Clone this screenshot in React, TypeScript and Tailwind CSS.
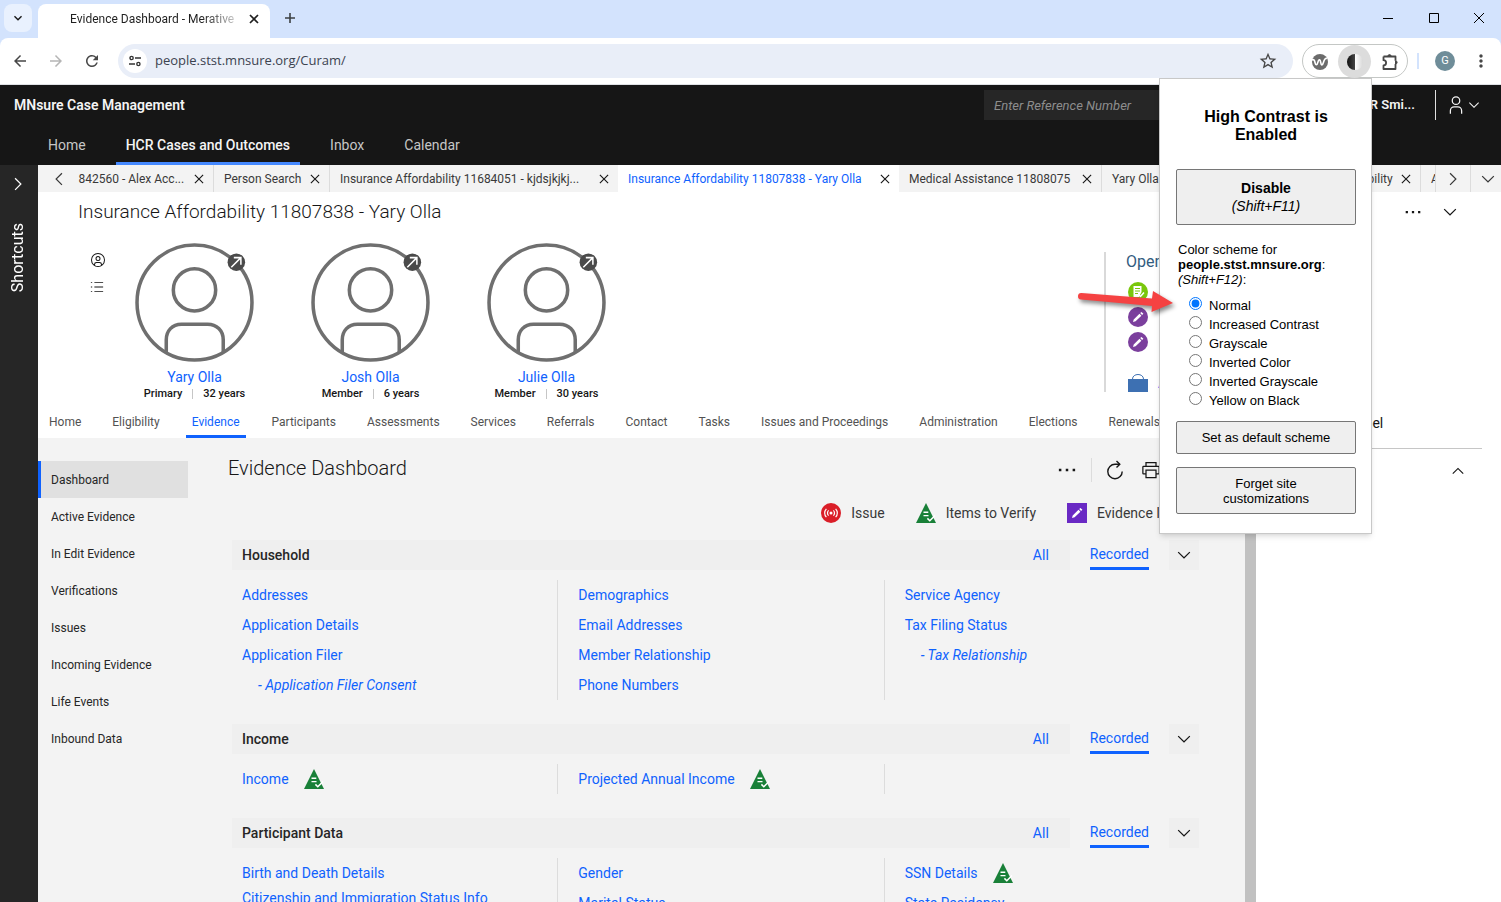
import { useState } from "react";
import type { ReactNode } from "react";
import {
  MdArrowBack,
  MdArrowForward,
  MdKeyboardArrowDown,
  MdMoreVert,
  MdRefresh,
  MdStarBorder,
} from "react-icons/md";

type EvidenceLink = { label: string; verify?: boolean; sub?: boolean; tall?: boolean };
type Section = { title: string; columns: EvidenceLink[][] };

const primaryNav = ["Home", "HCR Cases and Outcomes", "Inbox", "Calendar"];

const members = [
  { name: "Yary Olla", role: "Primary", age: "32 years" },
  { name: "Josh Olla", role: "Member", age: "6 years" },
  { name: "Julie Olla", role: "Member", age: "30 years" },
];

const caseNav = [
  "Home",
  "Eligibility",
  "Evidence",
  "Participants",
  "Assessments",
  "Services",
  "Referrals",
  "Contact",
  "Tasks",
  "Issues and Proceedings",
  "Administration",
  "Elections",
  "Renewals",
];

const sideNav = [
  "Dashboard",
  "Active Evidence",
  "In Edit Evidence",
  "Verifications",
  "Issues",
  "Incoming Evidence",
  "Life Events",
  "Inbound Data",
];

const sections: Section[] = [
  {
    title: "Household",
    columns: [
      [
        { label: "Addresses" },
        { label: "Application Details" },
        { label: "Application Filer" },
        { label: "Application Filer Consent", sub: true },
      ],
      [
        { label: "Demographics" },
        { label: "Email Addresses" },
        { label: "Member Relationship" },
        { label: "Phone Numbers" },
      ],
      [
        { label: "Service Agency" },
        { label: "Tax Filing Status" },
        { label: "Tax Relationship", sub: true },
      ],
    ],
  },
  {
    title: "Income",
    columns: [
      [{ label: "Income", verify: true }],
      [{ label: "Projected Annual Income", verify: true }],
      [],
    ],
  },
  {
    title: "Participant Data",
    columns: [
      [
        { label: "Birth and Death Details" },
        { label: "Citizenship and Immigration Status Info", tall: true },
      ],
      [{ label: "Gender" }, { label: "Marital Status" }],
      [{ label: "SSN Details", verify: true }, { label: "State Residency" }],
    ],
  },
];

const schemes = [
  "Normal",
  "Increased Contrast",
  "Grayscale",
  "Inverted Color",
  "Inverted Grayscale",
  "Yellow on Black",
];

const glyphs = {
  down: "M16 22 6 12l1.4-1.4 8.6 8.6 8.6-8.6L26 12z",
  up: "M16 10 26 20l-1.4 1.4-8.6-8.6-8.6 8.6L6 20z",
  left: "M10 16 20 6l1.4 1.4-8.6 8.6 8.6 8.6L20 26z",
  right: "M22 16 12 26l-1.4-1.4 8.6-8.6-8.6-8.6L12 6z",
  close:
    "M24 9.4 22.6 8 16 14.6 9.4 8 8 9.4l6.6 6.6L8 22.6 9.4 24l6.6-6.6 6.6 6.6 1.4-1.4-6.6-6.6z",
  user: "M16 4a5 5 0 1 1-5 5 5 5 0 0 1 5-5m0-2a7 7 0 1 0 7 7 7 7 0 0 0-7-7zM26 30h-2v-5a5 5 0 0 0-5-5h-6a5 5 0 0 0-5 5v5H6v-5a7 7 0 0 1 7-7h6a7 7 0 0 1 7 7z",
  avatar:
    "M16 8a5 5 0 1 0 5 5 5 5 0 0 0-5-5zm0 8a3 3 0 1 1 3-3 3 3 0 0 1-3 3zM16 2a14 14 0 1 0 14 14A14 14 0 0 0 16 2zm-6 24.4V25a3 3 0 0 1 3-3h6a3 3 0 0 1 3 3v1.4a12 12 0 0 1-12 0zm14-1.5a5 5 0 0 0-5-4.9h-6a5 5 0 0 0-5 4.9 12 12 0 1 1 16 0z",
  list: "M10 5h20v2H10zM10 15h20v2H10zM10 25h20v2H10zM2 5h3v2H2zM2 15h3v2H2zM2 25h3v2H2z",
  print:
    "M28 9h-3V3H7v6H4a2 2 0 0 0-2 2v10a2 2 0 0 0 2 2h3v6h18v-6h3a2 2 0 0 0 2-2V11a2 2 0 0 0-2-2zM9 5h14v4H9zm14 22H9V17h14zm5-6h-3v-6H7v6H4V11h24z",
  more: "M3 14h4v4H3zM14 14h4v4h-4zM25 14h4v4h-4z",
};

function Glyph({ d, className }: { d: string; className: string }) {
  return (
    <svg viewBox="0 0 32 32" fill="currentColor" className={`shrink-0 ${className}`} aria-hidden>
      <path d={d} />
    </svg>
  );
}

function VerifyIcon() {
  return (
    <svg viewBox="0 0 20 20" className="size-5 shrink-0" aria-hidden>
      <path d="M10 0 20 20H0z" fill="#198038" />
      <path d="M7.5 9.2h4.8M7.5 12.6h5" stroke="#fff" strokeWidth="1.4" />
      <path d="m11.4 15.4 2.4 2.4 5.2-5.4" fill="none" stroke="#fff" strokeWidth="1.5" />
    </svg>
  );
}

function PencilIcon({ round }: { round?: boolean }) {
  return (
    <svg viewBox="0 0 20 20" className="size-5 shrink-0" aria-hidden>
      {round ? (
        <circle cx="10" cy="10" r="10" fill="#7b3f9d" />
      ) : (
        <path d="M0 0h20v20H0z" fill="#6929c4" />
      )}
      <path d="m5 15 .7-2.6 5.8-5.6 1.9 1.9-5.8 5.6zM12.2 6.1l1.3-1.2 1.9 1.9L14.100 8z" fill="#fff" />
    </svg>
  );
}

function IssueIcon() {
  return (
    <svg viewBox="0 0 20 20" className="size-5 shrink-0" aria-hidden>
      <circle cx="10" cy="10" r="10" fill="#da1e28" />
      <circle cx="10" cy="10" r="1.5" fill="#fff" />
      <path
        d="M7.6 7.4a3.6 3.6 0 0 0 0 5.2M12.4 7.4a3.6 3.6 0 0 1 0 5.2M5.4 5.8a6 6 0 0 0 0 8.4M14.6 5.8a6 6 0 0 1 0 8.4"
        fill="none"
        stroke="#fff"
        strokeWidth="1.2"
      />
    </svg>
  );
}

function BrowserChrome() {
  return (
    <div className="shrink-0 bg-[#d3e3fd] font-['Open_Sans',sans-serif]">
      <div className="flex h-[38px] items-stretch">
        <button
          aria-label="Search tabs"
          className="ml-1 mt-1 grid size-7 place-items-center rounded-lg bg-[#e9f1fe]"
        >
          <MdKeyboardArrowDown className="size-4" />
        </button>
        <div className="ml-[6px] mt-1 flex w-[232px] items-center rounded-t-lg bg-white pb-1 pl-8 pr-[10px] font-[Roboto,sans-serif] text-xs text-[#1f1f1f]">
          <span className="bg-gradient-to-r from-[#1f1f1f] from-80% to-[#c4c4c4] bg-clip-text text-transparent">
            Evidence Dashboard - Merative
          </span>
          <button aria-label="Close tab" className="ml-auto">
            <svg viewBox="0 0 12 12" className="size-3" stroke="#1f1f1f" strokeWidth="1.7">
              <path d="m2 2 8 8M10 2l-8 8" />
            </svg>
          </button>
        </div>
        <button aria-label="New tab" className="ml-[14px] pb-[2px]">
          <svg viewBox="0 0 12 12" className="size-3" stroke="#3c4043" strokeWidth="1.6">
            <path d="M6 1v10M1 6h10" />
          </svg>
        </button>
        <div className="ml-auto flex pb-[2px]">
          <button aria-label="Minimize" className="grid w-[46px] place-items-center">
            <svg viewBox="0 0 10 10" className="size-[10px]" stroke="#000">
              <path d="M0 5.5h10" />
            </svg>
          </button>
          <button aria-label="Maximize" className="grid w-[46px] place-items-center">
            <svg viewBox="0 0 10 10" className="size-[10px]" fill="none" stroke="#000">
              <path d="M.5.5h9v9h-9z" />
            </svg>
          </button>
          <button aria-label="Close window" className="grid w-[44px] place-items-center">
            <svg viewBox="0 0 10 10" className="size-[10px]" stroke="#000">
              <path d="m0 0 10 10M10 0 0 10" />
            </svg>
          </button>
        </div>
      </div>
      <div className="flex h-[47px] items-center rounded-t-lg border-b border-[#dfe1e5] bg-white pl-[2px] text-[#474747]">
        <button aria-label="Back" className="grid w-9 place-items-center">
          <MdArrowBack className="size-[18px]" />
        </button>
        <button aria-label="Forward" className="grid w-9 place-items-center text-[#b5b5b5]">
          <MdArrowForward className="size-[18px]" />
        </button>
        <button aria-label="Reload" className="grid w-9 place-items-center">
          <MdRefresh className="size-[18px]" />
        </button>
        <div className="ml-2 flex h-[34px] flex-1 items-center rounded-full bg-[#e9eef8] pl-[5px] pr-[15px]">
          <button
            aria-label="View site information"
            className="grid size-6 place-items-center rounded-full bg-white"
          >
            <svg viewBox="0 0 12 12" className="size-3" fill="none" stroke="#333" strokeWidth="1.4">
              <circle cx="2.6" cy="3" r="1.6" />
              <path d="M6 3h6M0 9h6" />
              <circle cx="9.4" cy="9" r="1.6" />
            </svg>
          </button>
          <input
            aria-label="Address"
            defaultValue="people.stst.mnsure.org/Curam/"
            className="ml-2 flex-1 bg-transparent text-[13px] text-[#3c4350] outline-none"
          />
          <button aria-label="Bookmark this page">
            <MdStarBorder className="size-5" />
          </button>
        </div>
        <div className="ml-[9px] grid h-[34px] w-[106px] grid-cols-3 place-items-center rounded-full border border-[#c4c7c5]">
          <button aria-label="Wave extension">
            <svg viewBox="0 0 16 16" className="size-4">
              <circle cx="8" cy="8" r="8" fill="#6b6b6b" />
              <path
                d="M0 6c2-1 2.600.500 3 2.500.6 3 2 3 2.800 0S8 4.500 8.600 8s1.800 4 2.800.500S13.500 4 15 4.500"
                fill="none"
                stroke="#fff"
                strokeWidth="1.600"
              />
            </svg>
          </button>
          <button
            aria-label="High Contrast"
            className="grid size-[33px] place-items-center rounded-full bg-[#dcdcdc]"
          >
            <svg viewBox="0 0 16 16" className="size-4">
              <defs>
                <linearGradient id="contrast-light">
                  <stop offset="0" stopColor="#fff" />
                  <stop offset="1" stopColor="#d8d8d8" />
                </linearGradient>
                <linearGradient id="contrast-dark">
                  <stop offset="0" stopColor="#111" />
                  <stop offset="1" stopColor="#444" />
                </linearGradient>
              </defs>
              <path d="M8 0a8 8 0 0 0 0 16z" fill="url(#contrast-dark)" />
              <path d="M8 0a8 8 0 0 1 0 16z" fill="url(#contrast-light)" />
            </svg>
          </button>
          <button aria-label="Extensions">
            <svg viewBox="0 0 18 18" className="size-[18px]" fill="none" stroke="#474747">
              <path
                d="M2.500 3.500h12v4.300M14.500 11v5h-12v-3.600a2.600 2.600 0 0 0 0-5.200V3.500"
                strokeWidth="1.800"
                strokeLinejoin="round"
              />
              <path d="M14.500 7.800a1.600 1.600 0 0 1 0 3.200z" fill="#474747" />
              <path d="M6.900 3.200a1.600 1.600 0 0 1 3.200 0z" fill="#474747" />
            </svg>
          </button>
        </div>
        <div className="ml-[9px] h-4 w-[2px] bg-[#d3e3fd]" />
        <button
          aria-label="Profile"
          className="ml-4 grid size-5 place-items-center rounded-full bg-[#6f8d99] font-[Roboto,sans-serif] text-[11px] text-white"
        >
          G
        </button>
        <button aria-label="Browser menu" className="ml-4 mr-[10px]">
          <MdMoreVert className="size-5" />
        </button>
      </div>
    </div>
  );
}

function AppHeader() {
  return (
    <header className="h-20 shrink-0 bg-[#161616] text-sm text-[#c6c6c6]">
      <div className="flex h-10 items-center pl-[14px] pr-[19px]">
        <span className="font-semibold text-[#f4f4f4]">MNsure Case Management</span>
        <input
          aria-label="Reference number"
          placeholder="Enter Reference Number"
          className="ml-auto h-[30px] w-[240px] bg-[#262626] px-[10px] text-[13px] italic text-white outline-none placeholder:text-[#8d8d8d]"
        />
        <span className="ml-[123px] w-[68px] text-right text-[13px] font-semibold text-[#f4f4f4]">
          HCR Smi...
        </span>
        <div className="ml-5 h-[30px] w-px bg-[#e0e0e0]" />
        <button aria-label="Account" className="ml-[10px] flex items-center text-[#f4f4f4]">
          <Glyph d={glyphs.user} className="size-5" />
          <Glyph d={glyphs.down} className="size-4" />
        </button>
      </div>
      <nav className="flex h-10 gap-5 pl-[38px]">
        {primaryNav.map((item) => (
          <a
            key={item}
            href="#"
            className={
              item === "HCR Cases and Outcomes"
                ? "flex items-center border-b-[3px] border-[#4589ff] px-[10px] pt-[3px] font-medium text-[#f4f4f4]"
                : "flex items-center px-[10px]"
            }
          >
            {item}
          </a>
        ))}
      </nav>
    </header>
  );
}

function CaseTab({ label, className }: { label: string; className: string }) {
  return (
    <div className={`flex shrink-0 items-center justify-between px-[10px] ${className}`}>
      <a href="#" className="whitespace-nowrap">
        {label}
      </a>
      <button aria-label={`Close ${label}`} className="-mr-[5px] text-[#161616]">
        <Glyph d={glyphs.close} className="size-[18px]" />
      </button>
    </div>
  );
}

function CaseTabs() {
  return (
    <div className="flex h-[27px] shrink-0 bg-[#f3f3f3] text-xs text-[#393939]">
      <button aria-label="Previous tabs" className="grid w-10 place-items-center pl-[2px]">
        <Glyph d={glyphs.left} className="size-5" />
      </button>
      <div className="flex min-w-0 flex-1 overflow-hidden">
        <div className="flex w-[136px] shrink-0 justify-end overflow-hidden border-r border-[#dcdcdc]">
          <CaseTab label="11842560 - Alex Acc..." className="w-[158px]" />
        </div>
        <CaseTab label="Person Search" className="w-[116px] border-r border-[#dcdcdc]" />
        <CaseTab label="Insurance Affordability 11684051 - kjdsjkjkj..." className="w-[288px]" />
        <CaseTab
          label="Insurance Affordability 11807838 - Yary Olla"
          className="w-[281px] bg-white text-[#0f62fe]"
        />
        <CaseTab
          label="Medical Assistance 11808075"
          className="w-[203px] border-r border-[#dcdcdc]"
        />
        <CaseTab label="Yary Olla" className="w-[116px] border-r border-[#dcdcdc]" />
        <CaseTab
          label="Insurance Affordability"
          className="w-[203px] border-r border-[#dcdcdc] pl-[54px]"
        />
        <CaseTab label="Alex Account" className="w-[116px]" />
      </div>
      <button
        aria-label="Next tabs"
        className="grid w-9 place-items-center border-x border-[#dcdcdc]"
      >
        <Glyph d={glyphs.right} className="size-5" />
      </button>
      <button aria-label="All tabs" className="grid w-[30px] place-items-center pl-[3px]">
        <Glyph d={glyphs.down} className="size-5" />
      </button>
    </div>
  );
}

function MemberCard({ name, role, age }: { name: string; role: string; age: string }) {
  return (
    <div className="flex w-[119px] flex-col items-center">
      <svg viewBox="0 0 118 118" className="size-[119px]" fill="none" aria-hidden>
        <g stroke="#6f6f6f" strokeWidth="3.5">
          <circle cx="59" cy="59" r="57" />
          <circle cx="59" cy="46.5" r="21" />
          <path d="M31 108V96c0-9 6-15.5 15-15.5h26c9 0 15.5 6.5 15.5 15.5v12" />
        </g>
        <circle cx="100.5" cy="19" r="8.7" fill="#4a4a4a" />
        <path d="m95.500 24 9.500-9.500M98 14.500h7v7" stroke="#fff" strokeWidth="1.5" />
      </svg>
      <a href="#" className="mt-[6px] text-sm leading-[18px] text-[#0f62fe]">
        {name}
      </a>
      <div className="flex items-center gap-[10px] whitespace-nowrap text-[11px] font-medium leading-4 text-[#161616]">
        <span>{role}</span>
        <span className="h-[10px] w-px bg-[#c6c6c6]" />
        <span>{age}</span>
      </div>
    </div>
  );
}

function CaseContext() {
  return (
    <div className="flex h-[173px] shrink-0 pl-[52px] pt-[11px]">
      <div className="flex w-[14px] flex-col gap-3 pt-[9px]">
        <Glyph d={glyphs.avatar} className="size-4" />
        <Glyph d={glyphs.list} className="size-[14px]" />
      </div>
      <div className="ml-[31px] flex gap-[57px]">
        {members.map((m) => (
          <MemberCard key={m.name} {...m} />
        ))}
      </div>
      <div className="ml-auto mt-[9px] h-[140px] w-[397px] border-l-2 border-[#d9d9d9] pl-5">
        <h2 className="text-base leading-5 text-[#325c80]">Open</h2>
        <div className="mt-[10px] flex flex-col gap-[5px] pl-[2px]">
          <svg viewBox="0 0 20 20" className="size-5" aria-hidden>
            <circle cx="10" cy="10" r="10" fill="#7ac70c" />
            <path d="M5.5 4h8v6L11 15H5.500z" fill="#fff" />
            <path d="M7 6.500h5M7 9h5M7 11.500h3" stroke="#7ac70c" />
            <path d="m10.500 12.500 2 2 3.500-4" fill="none" stroke="#fff" strokeWidth="1.5" />
          </svg>
          <PencilIcon round />
          <PencilIcon round />
        </div>
        <div className="mt-[21px] flex items-center gap-[10px] pl-[2px] text-sm text-[#0f62fe]">
          <svg viewBox="0 0 20 18" className="h-[18px] w-5" aria-hidden>
            <path d="M0 5h20v13H0z" fill="#3d70b2" />
            <path d="M4.500 5c0-6 11-6 11 0" fill="none" stroke="#3d70b2" />
          </svg>
          <a href="#">Applications</a>
        </div>
      </div>
    </div>
  );
}

function SectionBlock({ title, columns }: Section) {
  return (
    <section>
      <div className="flex h-[30px] text-sm text-[#0f62fe]">
        <div className="flex flex-1 items-center justify-between bg-[#efefef] pl-[10px] pr-[21px]">
          <h3 className="font-medium text-[#262626]">{title}</h3>
          <a href="#">All</a>
        </div>
        <a href="#" className="ml-5 border-b-[3px] border-[#0f62fe] leading-7">
          Recorded
        </a>
        <button
          aria-label={`Collapse ${title}`}
          className="ml-5 grid w-[30px] place-items-center bg-[#efefef] text-[#161616]"
        >
          <Glyph d={glyphs.down} className="size-5" />
        </button>
      </div>
      <div className="-mr-3 mt-[10px] grid grid-cols-3 text-sm text-[#0f62fe]">
        {columns.map((links, i) => (
          <ul
            key={i}
            className="border-r border-[#dcdcdc] pl-5 first:pl-[10px] last:border-r-0"
          >
            {links.map((link) => (
              <li
                key={link.label}
                className={
                  link.tall ? "h-10 leading-5" : "flex h-[30px] items-center gap-[15px]"
                }
              >
                {link.sub ? (
                  <a href="#" className="pl-4 italic">
                    - {link.label}
                  </a>
                ) : (
                  <a href="#">{link.label}</a>
                )}
                {link.verify && <VerifyIcon />}
              </li>
            ))}
          </ul>
        ))}
      </div>
    </section>
  );
}

function LegendItem({ icon, label }: { icon: ReactNode; label: string }) {
  return (
    <span className="flex items-center gap-[10px]">
      {icon}
      {label}
    </span>
  );
}

function Dashboard() {
  return (
    <div className="flex min-h-0 flex-1 bg-[#f3f3f3]">
      <nav className="mt-[23px] w-[150px] shrink-0 text-xs text-[#262626]">
        {sideNav.map((item) => (
          <a
            key={item}
            href="#"
            className={
              item === "Dashboard"
                ? "flex h-[37px] items-center border-l-[3px] border-[#0f62fe] bg-[#e0e0e0] pl-[10px]"
                : "flex h-[37px] items-center pl-[13px]"
            }
          >
            {item}
          </a>
        ))}
      </nav>
      <main className="min-w-0 flex-1 overflow-hidden pl-11 pr-[46px] pt-4">
        <div className="flex h-7 items-center text-[#161616]">
          <h2 className="-ml-1 text-xl font-light">Evidence Dashboard</h2>
          <div className="ml-auto flex items-center pt-[3px]">
            <button aria-label="More actions">
              <Glyph d={glyphs.more} className="size-5" />
            </button>
            <div className="ml-[14px] h-6 w-px bg-[#dcdcdc]" />
            <button aria-label="Refresh" className="ml-[13px]">
              <svg
                viewBox="0 0 20 20"
                className="size-5"
                fill="none"
                stroke="#161616"
                strokeWidth="1.4"
              >
                <path d="M14.500 4.300H10a7.200 7.200 0 1 0 7.200 7.200" />
                <path d="m11.500 1 3.300 3.300-3.300 3.300" />
              </svg>
            </button>
            <button aria-label="Print" className="ml-4">
              <Glyph d={glyphs.print} className="size-5" />
            </button>
            <button aria-label="Help" className="ml-[18px] size-5" />
          </div>
        </div>
        <div className="mb-[17px] mt-[21px] flex h-5 items-center justify-end gap-[31px] pr-1 text-sm text-[#393939]">
          <LegendItem icon={<IssueIcon />} label="Issue" />
          <LegendItem icon={<VerifyIcon />} label="Items to Verify" />
          <LegendItem icon={<PencilIcon />} label="Evidence In Edit" />
        </div>
        <div className="flex flex-col gap-6">
          {sections.map((s) => (
            <SectionBlock key={s.title} {...s} />
          ))}
        </div>
      </main>
      <div className="w-[11px] shrink-0 bg-[#c1c1c1]" />
    </div>
  );
}

function ContrastPopup() {
  const [scheme, setScheme] = useState("Normal");

  return (
    <div className="absolute right-[129px] top-[78px] w-[213px] border border-[#c8c8c8] bg-white pb-[19px] pl-4 pr-[15px] pt-[29px] font-['Liberation_Sans',sans-serif] text-[13px] leading-[15px] text-black shadow-md">
      <h1 className="text-center text-base font-bold leading-[18px]">
        High Contrast is
        <br />
        Enabled
      </h1>
      <button className="mt-[25px] block h-14 w-full rounded-[2px] border border-[#767676] bg-[#efefef] text-sm leading-[18px]">
        <b>Disable</b>
        <br />
        <i>(Shift+F11)</i>
      </button>
      <fieldset className="mt-[17px]">
        <legend className="pl-[2px]">
          Color scheme for
          <br />
          <b>people.stst.mnsure.org</b>:
          <br />
          <i>(Shift+F12)</i>:
        </legend>
        <div className="mt-2 pl-[13px]">
          {schemes.map((s) => (
            <label key={s} className="flex h-[19px] items-end gap-[7px]">
              <input
                type="radio"
                name="scheme"
                className="mx-0 mb-1 mt-0 size-[13px]"
                checked={scheme === s}
                onChange={() => setScheme(s)}
              />
              <span className="mb-px">{s}</span>
            </label>
          ))}
        </div>
      </fieldset>
      <button className="mt-3 block h-[33px] w-full rounded-[2px] border border-[#767676] bg-[#efefef]">
        Set as default scheme
      </button>
      <button className="mt-[13px] block h-[47px] w-full rounded-[2px] border border-[#767676] bg-[#efefef]">
        Forget site
        <br />
        customizations
      </button>
    </div>
  );
}

export default function App() {
  return (
    <div className="relative flex h-screen flex-col overflow-hidden bg-white font-[Roboto,sans-serif] text-[#161616]">
      <BrowserChrome />
      <AppHeader />
      <div className="flex min-h-0 flex-1">
        <div className="flex w-[38px] shrink-0 flex-col items-center bg-[#262626] pr-[2px] pt-[9px] text-white">
          <button aria-label="Open shortcuts">
            <Glyph d={glyphs.right} className="size-5" />
          </button>
          <span className="mt-[29px] rotate-180 text-base [writing-mode:vertical-rl]">
            Shortcuts
          </span>
        </div>
        <div className="flex min-w-0 flex-1 flex-col">
          <CaseTabs />
          <div className="flex h-10 shrink-0 items-center pl-10 pr-[41px]">
            <h1 className="text-[19px] font-light">Insurance Affordability 11807838 - Yary Olla</h1>
            <button aria-label="Case actions" className="ml-auto">
              <Glyph d={glyphs.more} className="size-[18px]" />
            </button>
            <button aria-label="Collapse case header" className="ml-[18px]">
              <Glyph d={glyphs.down} className="size-5" />
            </button>
          </div>
          <CaseContext />
          <div className="flex min-h-0 flex-1">
            <div className="flex min-w-0 flex-1 flex-col">
              <nav className="flex h-[33px] shrink-0 gap-[21px] overflow-hidden whitespace-nowrap pl-[6px] text-xs text-[#525252]">
                {caseNav.map((item) => (
                  <a
                    key={item}
                    href="#"
                    className={
                      item === "Evidence"
                        ? "flex items-center border-b-[3px] border-[#0f62fe] px-[6px] pt-[3px] text-[#0f62fe]"
                        : "flex items-center px-[5px]"
                    }
                  >
                    {item}
                  </a>
                ))}
              </nav>
              <Dashboard />
            </div>
            <aside className="w-[245px] shrink-0 px-[19px]">
              <h2 className="h-11 border-b border-[#c6c6c6] pl-8 text-sm leading-9">Smart Panel</h2>
              <button aria-label="Collapse panel" className="ml-auto mr-[15px] mt-[13px] block">
                <Glyph d={glyphs.up} className="size-[18px]" />
              </button>
            </aside>
          </div>
        </div>
      </div>
      <ContrastPopup />
      <svg
        viewBox="0 0 98 30"
        className="absolute right-[326px] top-[286px] h-[30px] w-[98px] drop-shadow-[2px_3px_2px_rgba(0,0,0,0.45)]"
        aria-hidden
      >
        <path
          d="M4.500 7 75 12.500 76 5l20 12-21.500 9 .5-6L4 13.500A3.200 3.200 0 0 1 4.500 7z"
          fill="#f54242"
        />
      </svg>
    </div>
  );
}
